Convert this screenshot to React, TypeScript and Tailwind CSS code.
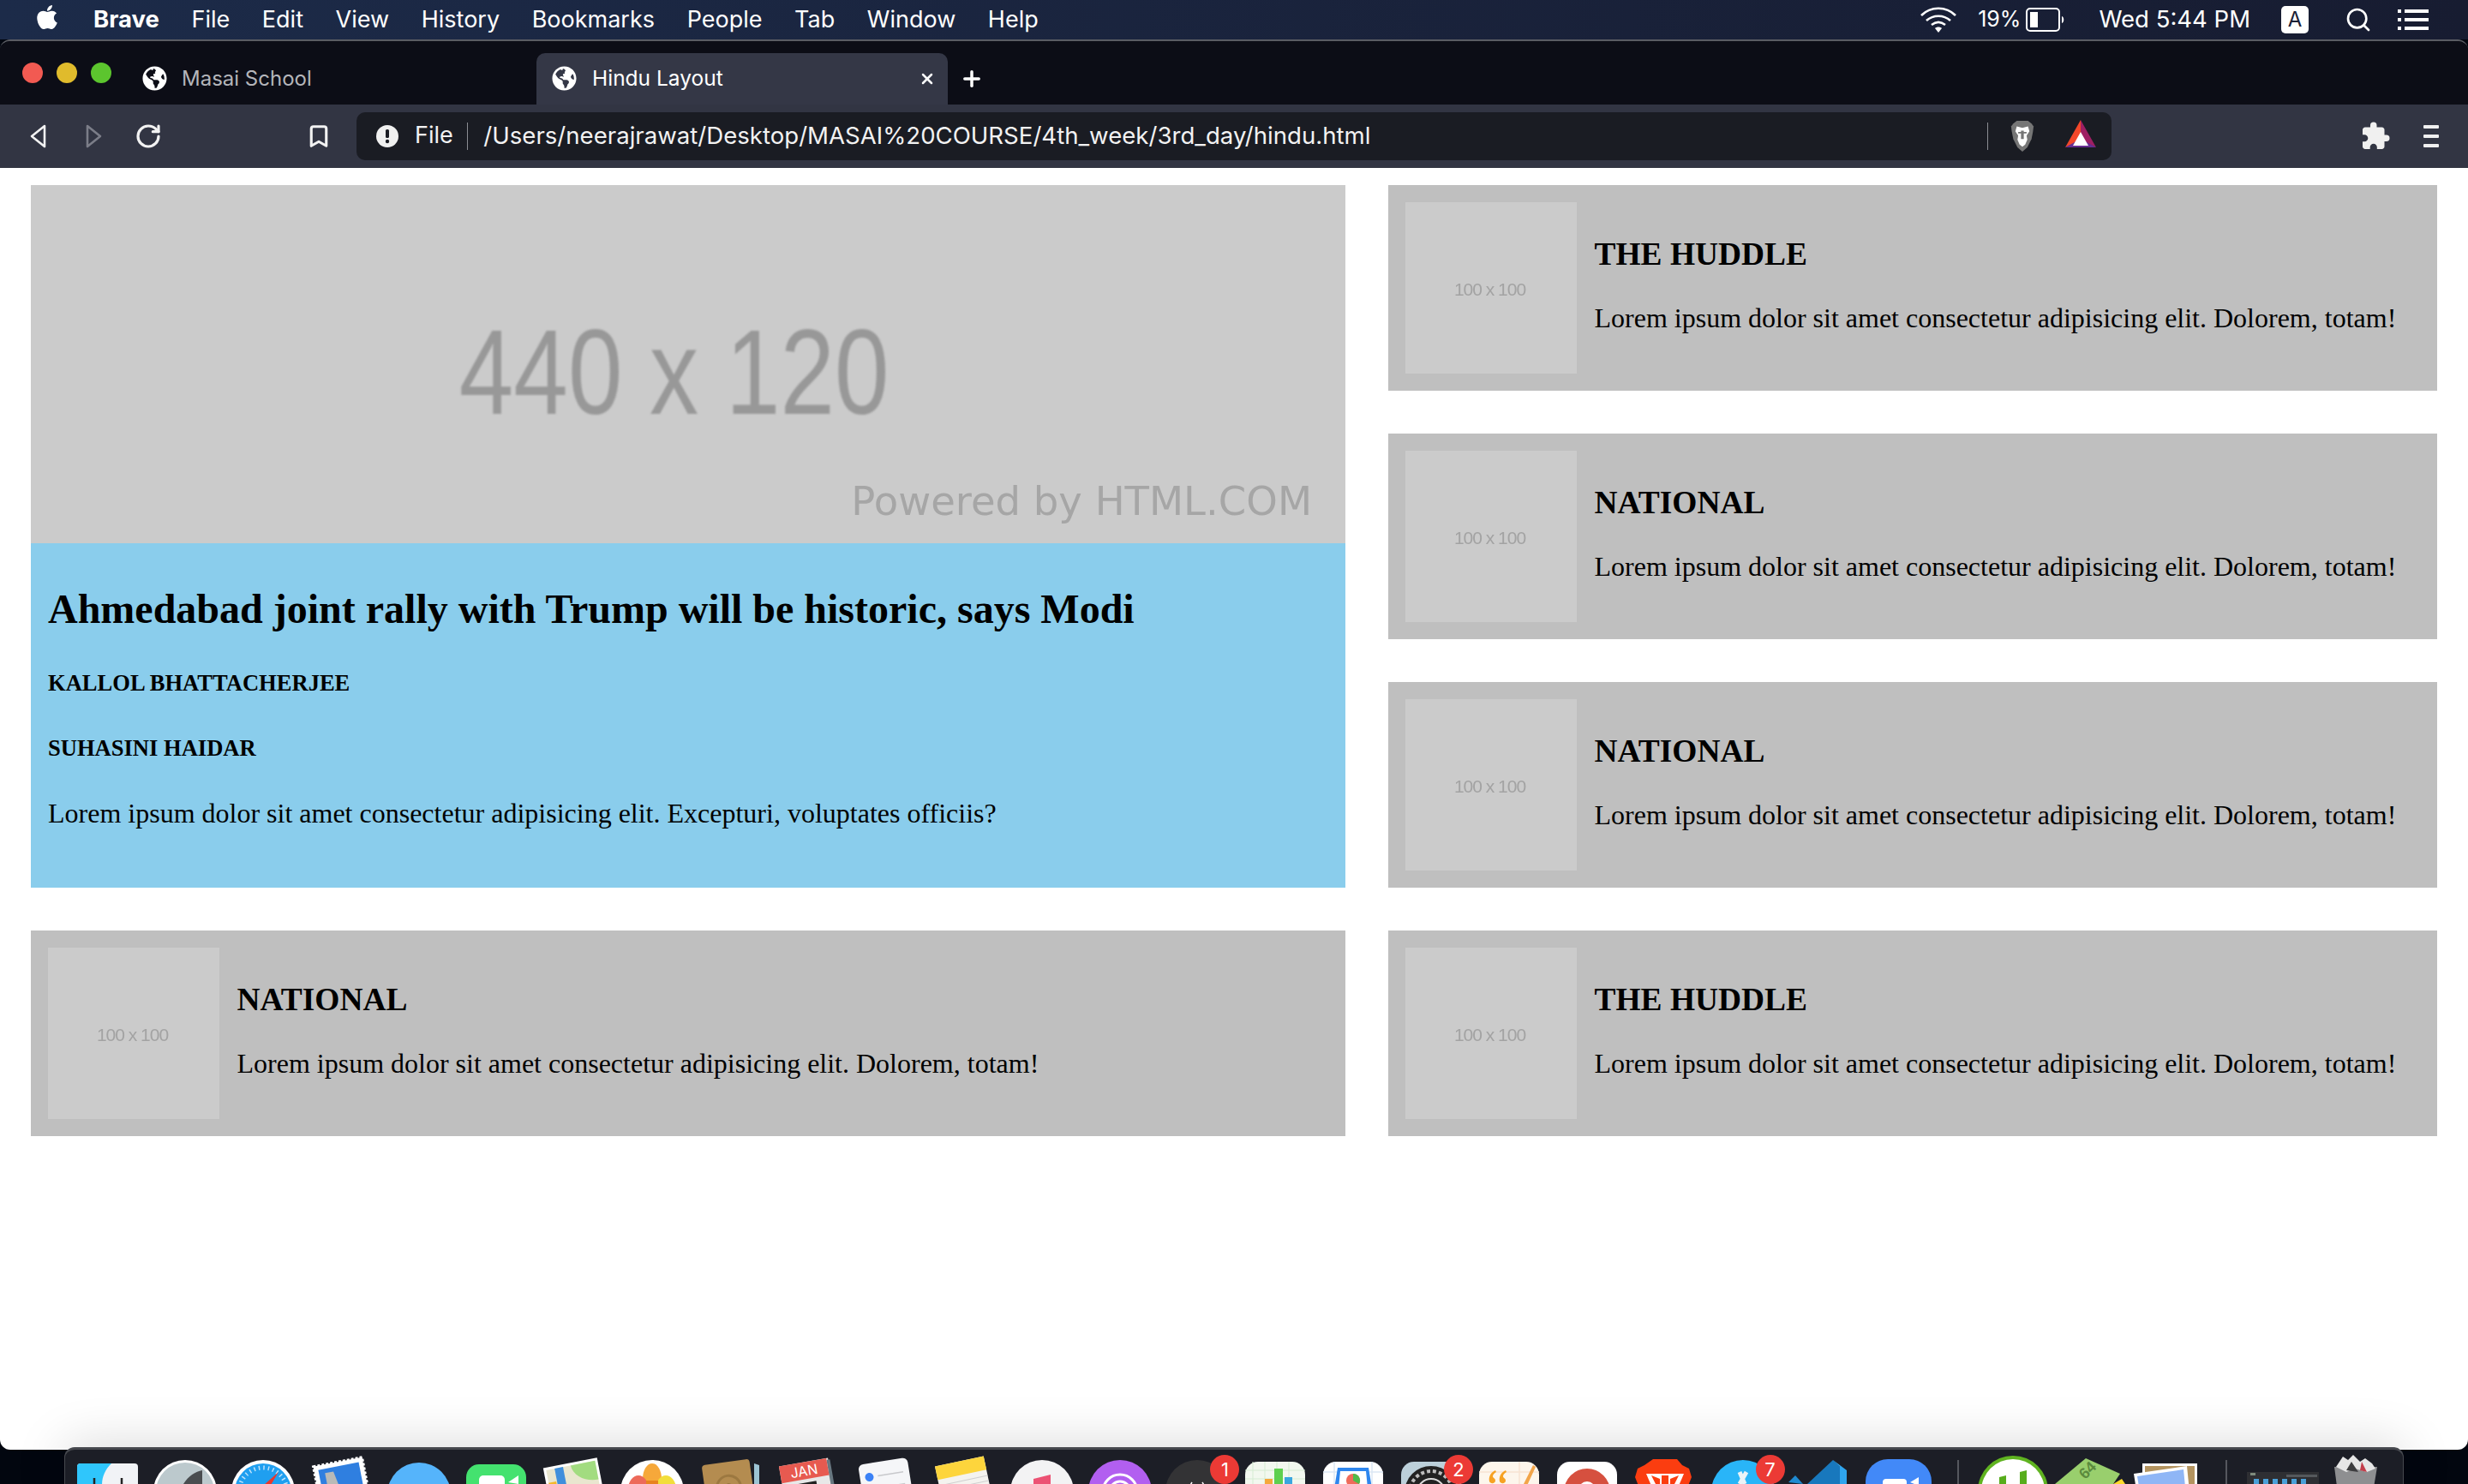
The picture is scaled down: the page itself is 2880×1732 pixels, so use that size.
import { Bookmark, Plus, RotateCw, Search, X } from "lucide-react";
import { ReactNode } from "react";
import { FaApple, FaGlobeAmericas } from "react-icons/fa";
import { MdExtension } from "react-icons/md";

const UI = "font-['Inter','Noto_Sans',sans-serif]";

const Lion = ({ shield, face, className }: { shield: string; face: string; className: string }) => (
  <svg viewBox="0 0 32 44" className={className}>
    <path d="M8 0h16l5 4 3 4-1 8-2 10-6 12-7 6-7-6-6-12L1 16 0 8l3-4z" fill={shield} />
    <path d="M8 8l8 2 8-2 2 7-4 6 1 6-3 7-4 3-4-3-3-7 1-6-4-6z" fill={face} />
    <path d="M14 14v12h4V14z M10 16h4v2h-4z M18 16h4v2h-4z" fill={shield} />
  </svg>
);

const MenuBar = () => (
  <div className={`flex h-[46px] items-center bg-gradient-to-r from-[#1c2b49] to-[#171c31] text-[27px] text-white ${UI}`}>
    <FaApple className="ml-[39px] mb-[6px] size-[32px]" />
    <span className="ml-[38px] text-[27.5px] font-bold">Brave</span>
    <span className="ml-[37.6px]">File</span>
    <span className="ml-[37.6px]">Edit</span>
    <span className="ml-[37.6px]">View</span>
    <span className="ml-[37.6px]">History</span>
    <span className="ml-[37.6px]">Bookmarks</span>
    <span className="ml-[37.6px]">People</span>
    <span className="ml-[37.6px]">Tab</span>
    <span className="ml-[37.6px]">Window</span>
    <span className="ml-[37.6px]">Help</span>
    <div className="ml-auto flex items-center">
      <svg viewBox="0 0 44 30" className="h-[30px] w-[44px]" fill="none" stroke="white" strokeWidth="2.6">
        <path d="M2 10C13-1 31-1 42 10" />
        <path d="M8 16c8-7 20-7 28 0" />
        <path d="M14 21c5-4 11-4 16 0" />
        <path d="M22 30l-4-5c2-2 6-2 8 0z" fill="white" stroke="none" />
      </svg>
      <span className="ml-[24px] text-[25px]">19%</span>
      <svg viewBox="0 0 46 28" className="ml-[6px] h-[28px] w-[46px]">
        <rect x="1" y="1" width="38" height="26" rx="4" fill="none" stroke="white" strokeWidth="2" />
        <rect x="5" y="5" width="9" height="18" fill="white" />
        <path d="M42 10c3 1 3 7 0 8z" fill="white" />
      </svg>
      <span className="ml-[39px] text-[27.5px]">Wed 5:44 PM</span>
      <span className="ml-[36px] flex h-[32px] w-[32px] items-center justify-center rounded-[5px] bg-white text-[24px] text-[#1a2036]">A</span>
      <Search className="ml-[42px] size-[32px]" strokeWidth={2} />
      <svg viewBox="0 0 36 24" className="ml-[30px] mr-[46px] h-[24px] w-[36px]" fill="white">
        <rect x="0" y="0" width="4" height="4" />
        <rect x="8" y="0" width="28" height="4" />
        <rect x="0" y="10" width="4" height="4" />
        <rect x="8" y="10" width="28" height="4" />
        <rect x="0" y="20" width="4" height="4" />
        <rect x="8" y="20" width="28" height="4" />
      </svg>
    </div>
  </div>
);

const TabStrip = () => (
  <div className={`flex h-[74px] items-end bg-[#0c0d16] ${UI}`}>
    <div className="mb-[25px] ml-[26px] flex gap-[16px]">
      <span className="size-[24px] rounded-full bg-[#f25a52]" />
      <span className="size-[24px] rounded-full bg-[#e0bb2c]" />
      <span className="size-[24px] rounded-full bg-[#5cc52e]" />
    </div>
    <div className="ml-[36px] flex h-[60px] w-[460px] items-center pb-[1px] text-[24px] text-[#b4b5ba]">
      <FaGlobeAmericas className="size-[29px] text-white" />
      <span className="ml-[17px]">Masai School</span>
    </div>
    <div className="flex h-[60px] w-[480px] items-center rounded-t-[10px] bg-[#343746] pb-[1px] text-[24.5px] text-white">
      <FaGlobeAmericas className="ml-[18px] size-[29px] text-white" />
      <span className="ml-[18px]">Hindu Layout</span>
      <X className="ml-auto mr-[14px] size-[20px]" strokeWidth={3} />
    </div>
    <Plus className="mb-[16px] ml-[14px] size-[28px] text-white" strokeWidth={3} />
  </div>
);

const ToolBar = () => (
  <div className={`flex h-[74px] items-center border-b border-[#30333f] bg-[#323543] ${UI}`}>
    <svg viewBox="0 0 20 28" className="ml-[34px] h-[28px] w-[20px]" fill="none" stroke="#f2f2f2" strokeWidth="2.6">
      <path d="M18 2L3 14l15 12z" strokeLinejoin="round" />
    </svg>
    <svg viewBox="0 0 20 28" className="ml-[46px] h-[28px] w-[20px]" fill="none" stroke="#7b7d88" strokeWidth="2.6">
      <path d="M2 2l15 12L2 26z" strokeLinejoin="round" />
    </svg>
    <RotateCw className="ml-[37px] size-[32px] text-[#f2f2f2]" strokeWidth={2.4} />
    <Bookmark className="ml-[168px] size-[30px] text-[#f2f2f2]" strokeWidth={2.5} />
    <div className="ml-[29px] flex h-[56px] w-[2048px] items-center rounded-[10px] bg-[#1a1c23] text-[27px] text-[#f2f2f2]">
      <svg viewBox="0 0 26 26" className="ml-[23px] size-[26px]">
        <circle cx="13" cy="13" r="13" fill="#f0f0f0" />
        <rect x="11" y="5" width="4" height="10" rx="1.5" fill="#1a1c23" />
        <circle cx="13" cy="19" r="2.2" fill="#1a1c23" />
      </svg>
      <span className="ml-[19px]">File</span>
      <span className="ml-[16px] h-[32px] w-[1.5px] bg-[#8b8d93]" />
      <span className="ml-[18px] text-[27.6px]">/Users/neerajrawat/Desktop/MASAI%20COURSE/4th_week/3rd_day/hindu.html</span>
      <span className="ml-auto h-[32px] w-[1.5px] bg-[#8b8d93]" />
      <Lion shield="#767676" face="#ffffff" className="ml-[25px] h-[36px] w-[30px]" />
      <svg viewBox="0 0 36 38" className="ml-[35px] mr-[18px] h-[38px] w-[36px]">
        <path d="M18 0L0 32l18-8z" fill="#f2472a" />
        <path d="M18 0l18 32-18-8z" fill="#9e1f63" />
        <path d="M0 32h36l-18-10z" fill="#662d91" />
        <path d="M18 14l9 16H9z" fill="#ffffff" />
      </svg>
    </div>
    <MdExtension className="ml-[290px] size-[36px] text-[#f0f0f0]" />
    <div className="ml-[38px] flex flex-col gap-[7px]">
      <span className="h-[4px] w-[18px] rounded-[1px] bg-[#f0f0f0]" />
      <span className="h-[4px] w-[18px] rounded-[1px] bg-[#f0f0f0]" />
      <span className="h-[4px] w-[18px] rounded-[1px] bg-[#f0f0f0]" />
    </div>
  </div>
);

const Thumb = () => (
  <div className="flex size-[200px] shrink-0 items-center justify-center bg-[#cbcbcb] pr-[3px] pt-[4px]">
    <span className="font-['Liberation_Sans',sans-serif] text-[21px] tracking-[-1px] text-[#a3a3a3] blur-[0.6px]">100 x 100</span>
  </div>
);

const Card = ({ title }: { title: string }) => (
  <div className="flex h-[240px] bg-[#bfbfbf] p-[20px]">
    <Thumb />
    <div className="ml-[20.5px] flex flex-col justify-center pb-[7px]">
      <h3 className="mb-[35px] text-[37.44px] font-bold leading-[43px]">{title}</h3>
      <p className="text-[32px] leading-[37px]">Lorem ipsum dolor sit amet consectetur adipisicing elit. Dolorem, totam!</p>
    </div>
  </div>
);

const Page = () => (
  <div className="flex flex-1 justify-between bg-white px-[36px] pt-[20px] font-['Liberation_Serif',serif] text-black">
    <div className="flex w-[1534px] flex-col gap-[50px]">
      <div>
        <div className="flex h-[418px] flex-col items-center bg-[#cbcbcb] pt-[148px]">
          <span className="mr-[33px] scale-x-[0.81] font-['Liberation_Sans',sans-serif] text-[141px] leading-[140px] text-[#989898] blur-[1px]">440 x 120</span>
          <span className="mr-[-4px] mt-[56px] self-end pr-[43px] font-['DejaVu_Sans',sans-serif] text-[46.5px] leading-[50px] text-[#a6a6a6] blur-[0.6px]">Powered by HTML.COM</span>
        </div>
        <div className="h-[402px] bg-[#8acdec] px-[20px] pt-[49px]">
          <h2 className="text-[48px] font-bold leading-[55px]">Ahmedabad joint rally with Trump will be historic, says Modi</h2>
          <h5 className="mt-[44px] text-[26.56px] font-bold leading-[31px]">KALLOL BHATTACHERJEE</h5>
          <h5 className="mt-[45px] text-[26.56px] font-bold leading-[31px]">SUHASINI HAIDAR</h5>
          <p className="mt-[42px] text-[32px] leading-[37px]">Lorem ipsum dolor sit amet consectetur adipisicing elit. Excepturi, voluptates officiis?</p>
        </div>
      </div>
      <Card title="NATIONAL" />
    </div>
    <div className="flex w-[1224px] flex-col gap-[50px]">
      <Card title="THE HUDDLE" />
      <Card title="NATIONAL" />
      <Card title="NATIONAL" />
      <Card title="THE HUDDLE" />
    </div>
  </div>
);

// dock icons: drawn in a 92x40 slot, y=0 is the inner top of the dock
const Slot = ({ children, badge, w = "w-[90.9px]" }: { children?: ReactNode; badge?: string; w?: string }) => (
  <div className={`relative h-[40px] shrink-0 ${w}`}>
    <svg viewBox="0 0 92 40" className="h-[40px] w-[92px] overflow-visible">
      {children}
    </svg>
    {badge && (
      <span className={`absolute right-[-4px] top-[6px] flex h-[34px] w-[34px] items-center justify-center rounded-full bg-[#ec3a35] text-[22px] text-white ${UI}`}>
        {badge}
      </span>
    )}
  </div>
);

const Tile = ({ fill, y = 14 }: { fill: string; y?: number }) => <rect x="11" y={y} width="70" height="60" rx="15" fill={fill} />;
const Round = ({ fill, y = 12 }: { fill: string; y?: number }) => <circle cx="46" cy={y + 37} r="37" fill={fill} />;

const DockIcons = () => (
  <>
    <Slot>
      <rect x="11" y="16" width="71" height="50" rx="4" fill="#f1f3f6" />
      <path d="M11 20a4 4 0 014-4h36c-8 8-11 16-11 26H11z" fill="#2fc6fc" />
      <path d="M31 33v8M63 33v8" stroke="#222" strokeWidth="2.5" />
    </Slot>
    <Slot>
      <Round fill="#ffffff" />
      <circle cx="46" cy="49" r="34" fill="#bcc9cd" />
      <path d="M66 24c-10 2-22 10-26 26h26z" fill="#4a4d50" />
    </Slot>
    <Slot>
      <Round fill="#ffffff" />
      <circle cx="46" cy="49" r="33" fill="#1f9ff0" />
      <circle cx="46" cy="49" r="28" fill="none" stroke="#bfe3fb" strokeWidth="5" strokeDasharray="1.5 4" />
      <path d="M64 26L46 42l-5 10 10-4z" fill="#e8382e" />
    </Slot>
    <Slot>
      <g transform="rotate(-11 46 40)">
        <rect x="18" y="14" width="58" height="60" fill="#ffffff" stroke="#ffffff" strokeWidth="3" strokeDasharray="3 2" />
        <rect x="23" y="19" width="48" height="50" fill="#2f7fe0" />
        <path d="M30 24h10l3 16H30z" fill="#b9bab7" />
      </g>
    </Slot>
    <Slot>
      <Round fill="#55b4fb" y={15} />
    </Slot>
    <Slot>
      <Tile fill="#44e26f" y={17} />
      <rect x="26" y="30" width="30" height="20" rx="5" fill="#ffffff" />
      <path d="M60 38l12-8v10z" fill="#ffffff" />
    </Slot>
    <Slot>
      <g transform="rotate(-11 46 40)">
        <rect x="14" y="15" width="64" height="50" fill="#ffffff" />
        <rect x="17" y="18" width="58" height="40" fill="#e9e6cf" />
        <rect x="27" y="18" width="10" height="40" fill="#3f8fdc" />
        <path d="M46 18h29v22c-14 0-28-8-29-22z" fill="#a2dc80" />
        <rect x="17" y="33" width="9" height="20" fill="#f5b82a" />
      </g>
    </Slot>
    <Slot>
      <Round fill="#ffffff" />
      <ellipse cx="46" cy="34" rx="11" ry="18" fill="#f6a83a" />
      <ellipse cx="30" cy="46" rx="12" ry="16" fill="#ed6a5a" />
      <ellipse cx="62" cy="46" rx="12" ry="16" fill="#f2de3a" />
      <path d="M39 36h14v10H39z" fill="#e8831f" />
    </Slot>
    <Slot>
      <path d="M74 16l6 2v30h-6z" fill="#9cc4d4" />
      <g transform="rotate(-8 46 40)">
        <rect x="16" y="14" width="56" height="60" rx="4" fill="#b48c50" />
        <circle cx="44" cy="44" r="14" fill="none" stroke="#9c7840" strokeWidth="3" />
        <circle cx="44" cy="44" r="5" fill="#8f6d3a" />
      </g>
    </Slot>
    <Slot>
      <g transform="rotate(-10 46 40)">
        <rect x="16" y="14" width="58" height="60" fill="#e8e8e8" />
        <rect x="72" y="16" width="4" height="50" fill="#687780" />
        <rect x="16" y="14" width="56" height="20" fill="#e75a50" />
        <text x="44" y="30" textAnchor="middle" fontSize="16" fill="#ffffff" fontFamily="Inter, sans-serif">JAN</text>
        <rect x="34" y="38" width="22" height="10" fill="#222" />
      </g>
    </Slot>
    <Slot>
      <g transform="rotate(-9 46 40)">
        <rect x="17" y="13" width="58" height="60" rx="6" fill="#f5f6f8" />
        <circle cx="28" cy="29" r="5" fill="#3b82f6" />
        <path d="M38 29h30M38 43h30" stroke="#c8c9cc" strokeWidth="1.5" />
      </g>
    </Slot>
    <Slot>
      <g transform="rotate(-12 46 40)">
        <rect x="17" y="13" width="58" height="60" fill="#f4f3ef" />
        <rect x="17" y="13" width="58" height="16" fill="#fdd53c" />
        <path d="M17 36h58M17 42h58" stroke="#cfcfcf" strokeWidth="1" />
      </g>
    </Slot>
    <Slot>
      <Round fill="#f3f3f4" />
      <path d="M36 34l20-5v22H36z" fill="#ec5274" />
    </Slot>
    <Slot>
      <Round fill="#b25ff0" />
      <circle cx="46" cy="49" r="20" fill="none" stroke="#ffffff" strokeWidth="3" />
      <circle cx="46" cy="49" r="12" fill="none" stroke="#ffffff" strokeWidth="3" />
    </Slot>
    <Slot badge="1">
      <Round fill="#333335" />
      <path d="M40 38l-3 5M52 38l3 5" stroke="#ffffff" strokeWidth="1.5" />
    </Slot>
    <Slot>
      <Tile fill="#f2f8ef" />
      <path d="M20 14v30M34 14v30M48 14v30M62 14v30M11 24h70M11 34h70" stroke="#d5ecd2" strokeWidth="1" />
      <rect x="34" y="34" width="9" height="10" fill="#f5a83c" />
      <rect x="45" y="22" width="10" height="22" fill="#5ed04f" />
      <rect x="57" y="32" width="9" height="12" fill="#3aa6e0" />
    </Slot>
    <Slot>
      <Tile fill="#ffffff" />
      <path d="M24 14v30M68 14v30M11 26h70" stroke="#dbe8f5" strokeWidth="1.5" />
      <path d="M28 21h36l4 24H24z" fill="#2e86ee" />
      <path d="M31 25h30l2 20H29z" fill="#ffffff" />
      <circle cx="46" cy="36" r="8" fill="#ef6b5a" />
      <path d="M46 36V28a8 8 0 017 12z" fill="#4fba4a" />
    </Slot>
    <Slot badge="2">
      <Tile fill="#bcd0da" />
      <circle cx="46" cy="50" r="31" fill="#222" />
      <circle cx="46" cy="50" r="25" fill="none" stroke="#bdbdbd" strokeWidth="4" strokeDasharray="4 3" />
      <circle cx="46" cy="50" r="16" fill="none" stroke="#dcdcdc" strokeWidth="2" />
    </Slot>
    <Slot>
      <Tile fill="#fdf6ec" />
      <path d="M11 26h70M58 14v30" stroke="#f8e4d2" strokeWidth="1.5" />
      <path d="M30 24c-6 3-8 8-7 13 1 3 7 3 7-1 0-3-3-3-3-5 0-2 2-4 4-5zM42 24c-6 3-8 8-7 13 1 3 7 3 7-1 0-3-3-3-3-5 0-2 2-4 4-5z" fill="#f6a223" />
      <path d="M62 42l12-24 3 2-11 24z" fill="#f2a54a" />
    </Slot>
    <Slot>
      <Tile fill="#ffffff" />
      <circle cx="46" cy="49" r="27" fill="#d6503f" />
      <path d="M22 44a27 27 0 0048 0z" fill="#f2c12e" />
      <circle cx="46" cy="47" r="10" fill="#ffffff" />
    </Slot>
    <Slot>
      <path d="M32 11h28l6 7 8 4 3 10-4 10H15l-4-10 3-10 8-4z" fill="#fb3d10" />
      <path d="M24 28h44l-6 14H30z" fill="#ffffff" />
      <path d="M30 30l10 4v8h-4zM62 30l-10 4v8h4z" fill="#fb3d10" />
      <path d="M42 30h8v12h-8z" fill="#fb3d10" />
    </Slot>
    <Slot badge="7">
      <Round fill="#29b5f8" />
      <path d="M42 26l6 14M50 26l-8 14" stroke="#eaf3f7" strokeWidth="5" />
    </Slot>
    <Slot>
      <path d="M8 38l8-8 9 10z" fill="#1f8ad0" />
      <path d="M30 40L60 12l8 8v20z" fill="#1878bd" />
      <path d="M60 12l16 12v16H68V20z" fill="#2fa5ee" />
    </Slot>
    <Slot>
      <rect x="8" y="11" width="77" height="70" rx="26" fill="#4289f8" />
      <rect x="28" y="34" width="28" height="12" rx="4" fill="#ffffff" />
      <path d="M60 38l10-6v10z" fill="#ffffff" />
    </Slot>
    <span className="ml-[24px] mt-[12px] h-[30px] w-[1.5px] shrink-0 bg-[#55575e]" />
    <span className="w-[21.5px] shrink-0" />
    <Slot>
      <circle cx="42" cy="48" r="41" fill="#5fb320" />
      <circle cx="42" cy="48" r="37" fill="#ffffff" />
      <path d="M26 32l8-2v10h-8zM50 26l8-2v16h-8z" fill="#57ad1c" />
    </Slot>
    <Slot>
      <g transform="translate(-4 0)">
        <path d="M72 40l10-6 4 6z" fill="#fcd92b" />
        <path d="M4 40L40 10l40 18-8 12z" fill="#99cf6d" />
        <text x="32" y="30" fontSize="18" fontWeight="700" fill="#5b8a3d" transform="rotate(-45 42 24)" fontFamily="'Liberation Sans', sans-serif">64</text>
      </g>
    </Slot>
    <Slot w="w-[76px]">
      <g transform="translate(-7 0)">
        <rect x="18" y="16" width="64" height="40" fill="#ffffff" />
        <rect x="21" y="19" width="58" height="30" fill="#b4945f" />
        <path d="M8 28l62-9 4 40-60 8z" fill="#ffffff" />
        <path d="M12 31l54-8 3 30-52 8z" fill="#8fb6f6" />
      </g>
    </Slot>
    <span className="ml-[32px] mt-[12px] h-[30px] w-[1.5px] shrink-0 bg-[#55575e]" />
    <span className="w-[19.5px] shrink-0" />
    <Slot>
      <rect x="4" y="26" width="84" height="20" fill="#2e2f33" />
      <path d="M8 27h6v3H8z" fill="#7e8a7c" />
      <path d="M50 29h36v3H50z" fill="#55585c" />
      {[12, 23, 34, 45, 56, 67].map((x) => (
        <rect key={x} x={x} y="34" width="6" height="6" fill="#4aa0d8" />
      ))}
    </Slot>
    <Slot>
      <g transform="translate(-7 0)">
        <path d="M22 20h50l-5 30H26z" fill="#8e8f91" />
        <path d="M24 20l8-12 6 4 6-6 8 8 6-4 8 6 4 6-10 4-14-4-10 4z" fill="#e6e6e6" />
        <path d="M42 14l8 12-14-2z" fill="#3d3d3f" />
        <path d="M54 14l6 12-8-2z" fill="#c23d4a" />
      </g>
    </Slot>
  </>
);

export default function App() {
  return (
    <div className="relative h-[1732px] w-[2880px] overflow-hidden bg-[#02060f]">
      <MenuBar />
      <div className="flex h-[1646px] flex-col overflow-hidden rounded-[12px] border-t-[2px] border-[#5a5c63]">
        <TabStrip />
        <ToolBar />
        <Page />
      </div>
      {/* dock */}
      <div className="absolute bottom-0 left-[75px] flex h-[43px] w-[2730px] rounded-t-[12px] border-x border-t-[3px] border-[#46484e] bg-[#1c1e26] pl-[3px] shadow-[0_0_60px_rgba(0,0,0,0.18)]">
        <DockIcons />
      </div>
    </div>
  );
}
